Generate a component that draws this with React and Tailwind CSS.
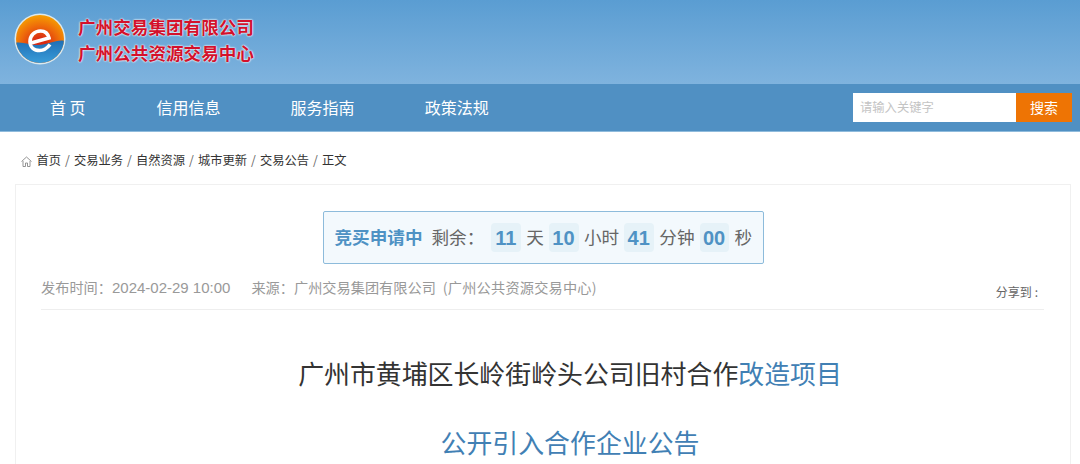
const font = '[font-family:"Microsoft_YaHei","Noto_Sans_CJK_SC",sans-serif]';

const navItems = ['首 页', '信用信息', '服务指南', '政策法规'];
const crumbs = ['首页', '交易业务', '自然资源', '城市更新', '交易公告', '正文'];

const Logo = () => (
  <svg width="52" height="52" viewBox="0 0 52 52" className="shrink-0">
    <defs>
      <radialGradient id="sun" cx="0.5" cy="0.62" r="0.62">
        <stop offset="0.2" stopColor="#d92a12" />
        <stop offset="0.6" stopColor="#ee6a0a" />
        <stop offset="1" stopColor="#f6a800" />
      </radialGradient>
      <linearGradient id="sea" x1="0" y1="0" x2="0" y2="1">
        <stop offset="0" stopColor="#1f6fb5" />
        <stop offset="1" stopColor="#3ba0dc" />
      </linearGradient>
      <clipPath id="disc">
        <circle cx="26" cy="26" r="24" />
      </clipPath>
    </defs>
    <circle cx="26" cy="26" r="25.5" fill="#dbe9ee" />
    <g clipPath="url(#disc)">
      <rect width="52" height="52" fill="url(#sun)" />
      <path d="M0 30C8 28 15 32 24 32C34 32 42 26 52 28V52H0Z" fill="url(#sea)" />
    </g>
    <path
      d="M17 30L35 25C34 20.5 30.5 18 26.5 18C20.5 18 16 22.5 16 28.5C16 34 20 37.5 25.5 37.5C29.5 37.5 33 35.5 36 31.5"
      fill="none"
      stroke="#fff"
      strokeWidth="3.6"
    />
  </svg>
);

const Num = ({ children }) => (
  <span className="w-[29.5px] h-[29px] pr-[1px] flex items-center justify-center bg-[#e6f2f8] rounded-sm text-[#4f92c4] font-bold text-[20px] [font-family:'Liberation_Sans',sans-serif]">
    {children}
  </span>
);

export default function App() {
  return (
    <div className={`w-[1080px] h-[464px] overflow-hidden bg-white ${font}`}>
      <header className="h-[84px] bg-gradient-to-b from-[#5a9dd2] to-[#7fb3de] flex items-start pt-[13px] pl-[14px] gap-[12px]">
        <Logo />
        <div className="flex flex-col gap-[2px] mt-[2px] text-[17.6px] leading-[24px] font-bold text-[#d3112c] [text-shadow:0_0_2px_#fff,0_0_2px_#fff]">
          <span>广州交易集团有限公司</span>
          <span>广州公共资源交易中心</span>
        </div>
      </header>

      <nav className="h-[48px] bg-[#5090c3] border-b border-[#8fbbdc] flex items-center">
        <ul className="flex pl-[50px] gap-[70px] text-white text-[16px] mb-[2px]">
          {navItems.map((item) => (
            <li key={item} className="whitespace-pre first:mr-[1px]">{item}</li>
          ))}
        </ul>
        <div className="ml-auto mr-[8px] flex h-[29px]">
          <div className="w-[163px] bg-white pl-[7px] text-[12.3px] leading-[29px] text-[#c4c4c4]">请输入关键字</div>
          <button className="w-[56px] bg-[#ee7404] text-white text-[14px]">搜索</button>
        </div>
      </nav>

      <div className="flex items-center h-[52px] pl-[21px] pt-[5px] text-[12.25px] text-[#333]">
        <svg width="11" height="11" viewBox="0 0 11 11" fill="none" stroke="#888" strokeWidth="0.9" className="mr-[4.5px] mt-[2px]">
          <path d="M0.5 5.5L5.5 1L10.5 5.5M2 5V10.5H4.5V7H6.5V10.5H9V5" />
        </svg>
        {crumbs.map((c, i) => (
          <span key={c} className="flex">
            {i > 0 && <span className="w-[13px] text-center text-[#666]">/</span>}
            {c}
          </span>
        ))}
      </div>

      <main className="mx-[15px] w-[1056px] h-[400px] border border-[#f0f0f0] pt-[26px] px-[25px]">
        <div className="flex justify-center">
          <div className="w-[441px] h-[53px] border border-[#8dbbdb] rounded-[2px] bg-[#f3f9fd] flex items-center pl-[11px] text-[17.6px] text-[#666]">
            <span className="font-bold text-[#4f92c4] mr-[9px]">竞买申请中</span>
            <span className="w-[60px]">剩余：</span>
            <Num>11</Num>
            <span className="mx-[5.3px]">天</span>
            <Num>10</Num>
            <span className="mx-[5.3px]">小时</span>
            <Num>41</Num>
            <span className="mx-[5.3px]">分钟</span>
            <Num>00</Num>
            <span className="ml-[5.3px]">秒</span>
          </div>
        </div>

        <div className="mt-[11px] h-[35px] border-b border-[#eee] flex justify-between w-[1003px] text-[14.2px] text-[#999]">
          <div className="leading-[24px]">
            <span>发布时间：<span className="text-[15px] [font-family:'Liberation_Sans',sans-serif]">2024-02-29 10:00</span></span>
            <span className="ml-[21px]">来源：广州交易集团有限公司</span>
            <span className="ml-[7px] tracking-[0.2px]">(广州公共资源交易中心)</span>
          </div>
          <span className="text-[12px] text-[#666] mt-[8px] mr-[6px]">分享到<span className="ml-[3px]">:</span></span>
        </div>

        <h1 className="mt-[41px] h-[44px] pl-[54px] text-center text-[25.9px] leading-[44px] text-[#333] font-normal">
          广州市黄埔区长岭街岭头公司旧村合作<span className="text-[#4180b4]">改造项目</span>
        </h1>
        <h1 className="mt-[25px] pl-[54px] text-center text-[25.9px] leading-[44px] text-[#4180b4] font-normal">公开引入合作企业公告</h1>
      </main>
    </div>
  );
}
